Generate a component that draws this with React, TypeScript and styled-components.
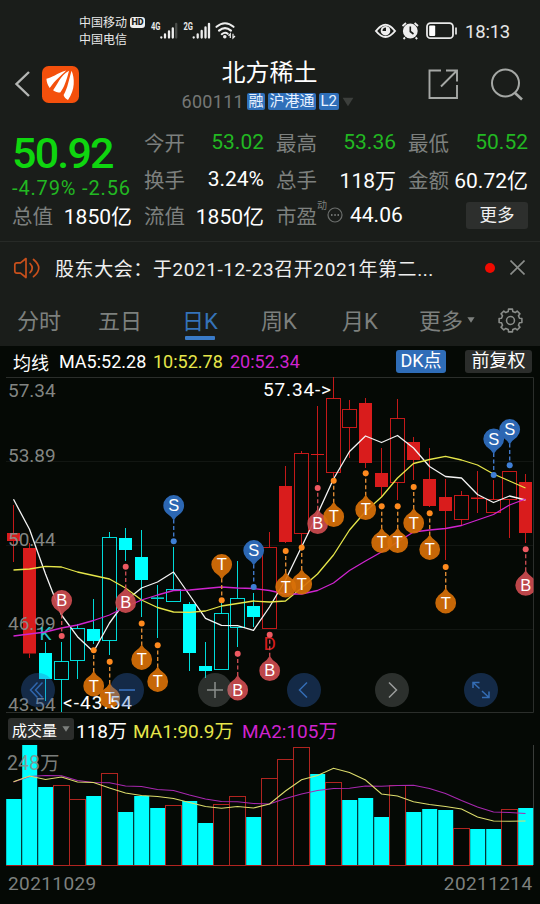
import React from 'react';
import styled, { createGlobalStyle } from 'styled-components';

const FONT = 'Roboto, "Noto Sans CJK SC", sans-serif';
const RED = '#d91c1c';
const CYAN = '#00ffff';
const YELLOW = '#e6e64a';
const MAGENTA = '#cf24cf';

const GlobalStyle = createGlobalStyle`
  html, body { margin: 0; padding: 0; background: #050905; }
  * { box-sizing: border-box; }
  svg { display: block; flex: none; }
`;

const Screen = styled.main`
  width: 540px;
  height: 904px;
  overflow: hidden;
  display: flex;
  flex-direction: column;
  background: #050905;
  color: #fff;
  font-family: ${FONT};
  white-space: nowrap;
`;

const StatusBar = styled.div`
  height: 50px;
  flex: none;
  display: flex;
  align-items: flex-start;
  padding: 0 30px 0 79px;
  background: #1a1d1a;
`;

const Carriers = styled.div`
  margin-top: 15px;
  width: 51px;
  font-size: 12px;
  line-height: 17px;
  color: #e8e8e8;
`;

const HdBadge = styled.span`
  margin-top: 17px;
  width: 15px;
  height: 11px;
  border-radius: 3px;
  background: #eee;
  color: #1a1d1a;
  font-size: 9px;
  font-weight: 900;
  line-height: 11.5px;
  text-align: center;
`;

const StatusIcons = styled.svg`
  margin: 20px 0 0 5px;
`;

const DeviceIcons = styled.svg`
  margin: 20px 0 0 auto;
`;

const Clock = styled.span`
  margin: 20px 0 0 7px;
  width: 45px;
  font-size: 18.5px;
  line-height: 24px;
  letter-spacing: -0.2px;
  color: #e6e6e6;
`;

const Header = styled.header`
  height: 68px;
  flex: none;
  display: grid;
  grid-template-columns: 80px 1fr 120px;
  background: #1a1d1a;
`;

const HeaderSide = styled.div<{ $gap: number; $left: number }>`
  display: flex;
  align-items: center;
  gap: ${(p) => p.$gap}px;
  padding-left: ${(p) => p.$left}px;
`;

const TitleBlock = styled.div`
  display: flex;
  flex-direction: column;
  align-items: center;
  padding-left: 39px;
`;

const StockName = styled.h1`
  margin: 7px 0 0;
  font-size: 24px;
  font-weight: 400;
  line-height: 32px;
`;

const CodeRow = styled.div`
  display: flex;
  align-items: center;
  margin: 3px 0 0 -4px;
  height: 19px;
  gap: 3px;
`;

const Code = styled.span`
  color: #757775;
  font-size: 18px;
  letter-spacing: 0.3px;
`;

const Tag = styled.span`
  height: 17px;
  padding: 0 1.5px;
  border-radius: 2px;
  background: #2f6fb9;
  font-size: 15px;
  line-height: 17px;
  color: #e8f2ff;
`;

const Quote = styled.section`
  height: 124px;
  flex: none;
  display: grid;
  grid-template-columns: repeat(4, 120px);
  grid-template-rows: repeat(3, 36.5px);
  column-gap: 12px;
  padding: 6px 0 0 12px;
  background: #1a1d1a;
  border-bottom: 1px solid #272a27;
`;

const PriceBlock = styled.div`
  grid-row: span 2;
`;

const Price = styled.div`
  margin-top: 6px;
  height: 48px;
  color: #0fd60f;
  font-size: 43px;
  font-weight: 500;
  line-height: 46px;
  letter-spacing: -1.8px;
`;

const Change = styled.div`
  height: 20px;
  color: #22b822;
  font-size: 20px;
  line-height: 20px;
  letter-spacing: 0.85px;
`;

const Metric = styled.div`
  display: flex;
  align-items: center;
  justify-content: space-between;
`;

const MetricLabel = styled.span`
  display: flex;
  align-items: center;
  color: #7d807e;
  font-size: 20.5px;
`;

const Sup = styled.sup`
  align-self: flex-start;
  margin-top: -1px;
  font-size: 10px;
  line-height: 14px;
`;

const MetricValue = styled.span<{ $down?: boolean }>`
  color: ${(p) => (p.$down ? '#22b822' : '#fff')};
  font-size: 21px;
`;

const PeMetric = styled(Metric)`
  justify-content: flex-start;
  gap: 7px;
`;

const MoreCell = styled.div`
  display: flex;
  align-items: center;
  justify-content: flex-end;
`;

const MoreButton = styled.button`
  width: 62px;
  height: 27px;
  padding: 0;
  border: 0;
  border-radius: 3px;
  background: #2d2f2d;
  color: #f0f0f0;
  font: 17.5px/26px ${FONT};
`;

const Notice = styled.section`
  height: 53px;
  flex: none;
  display: flex;
  align-items: center;
  padding: 0 15px 2px 13px;
  background: #1a1d1a;
`;

const NoticeText = styled.span`
  margin-left: 14px;
  font-size: 19px;
  letter-spacing: 0.58px;
  color: #efefef;
`;

const UnreadDot = styled.i`
  width: 10px;
  height: 10px;
  margin: 0 15px 0 auto;
  border-radius: 50%;
  background: #f00a00;
`;

const Tabs = styled.nav`
  height: 51px;
  flex: none;
  display: flex;
  align-items: flex-start;
  padding: 9px 0 0 17px;
  background: #1a1d1a;
`;

const Tab = styled.a<{ $width: number; $active?: boolean }>`
  display: flex;
  width: ${(p) => p.$width}px;
  font-size: 22px;
  line-height: 36px;
  color: ${(p) => (p.$active ? '#3573b9' : '#7d807e')};
`;

const TabLabel = styled.span<{ $active?: boolean }>`
  display: flex;
  flex-direction: column;
  align-items: center;
  &::after {
    content: '';
    width: 30px;
    height: 4px;
    margin-top: -4px;
    border-radius: 1px;
    background: ${(p) => (p.$active ? '#3a7bc8' : 'transparent')};
  }
`;

const Legend = styled.div`
  height: 31px;
  flex: none;
  display: flex;
  align-items: center;
  padding: 0 8px 0 13px;
  font-size: 18px;
`;

const LegendItem = styled.span<{ $color: string; $width: number }>`
  width: ${(p) => p.$width}px;
  color: ${(p) => p.$color};
`;

const Chip = styled.span<{ $bg: string; $width: number }>`
  width: ${(p) => p.$width}px;
  height: 23px;
  border-radius: 3px;
  background: ${(p) => p.$bg};
  font-size: 18px;
  line-height: 22px;
  text-align: center;
`;

const Chips = styled.div`
  display: flex;
  gap: 19px;
  margin: 0 0 0 auto;
`;

const PricePanel = styled.section`
  position: relative;
  height: 337px;
  flex: none;
`;

const ChartSvg = styled.svg`
  overflow: visible;
`;

const ChartControls = styled.div`
  position: absolute;
  left: 21px;
  bottom: 7px;
  width: 477px;
  display: flex;
  justify-content: space-between;
`;

const RoundButton = styled.button<{ $tone: 'blue' | 'gray' }>`
  width: 34px;
  height: 34px;
  padding: 0;
  border: 0;
  border-radius: 50%;
  display: grid;
  place-items: center;
  background: ${(p) => (p.$tone === 'blue' ? 'rgba(50, 108, 200, .34)' : 'rgba(135, 140, 138, .3)')};
`;

const VolumeLegend = styled.div`
  height: 31px;
  flex: none;
  display: flex;
  align-items: center;
  padding: 0 0 1px 8px;
  font-size: 19px;
`;

const IndicatorSelect = styled.span`
  display: flex;
  align-items: center;
  justify-content: center;
  gap: 5px;
  width: 66px;
  height: 22px;
  margin-right: 2px;
  border-radius: 3px;
  background: #2b2d2b;
  font-size: 15px;
`;

const Dates = styled.footer`
  display: flex;
  justify-content: space-between;
  padding: 5px 7.5px 0 8px;
  color: #7d807e;
  font-size: 19px;
  line-height: 26px;
  letter-spacing: 0.4px;
`;

type Kind = 'fill' | 'hollow';
// kind, colour, body top, body bottom, wick top, wick bottom
type Candle = [Kind, string, number, number, number, number];

const candles: Candle[] = [
  ['fill', RED, 533, 541, 505, 562],
  ['fill', RED, 548, 653.5, 543, 658],
  ['fill', CYAN, 653, 679, 642, 701],
  ['hollow', CYAN, 661.5, 679.5, 642, 712],
  ['hollow', CYAN, 628.5, 660.5, 624, 679],
  ['fill', CYAN, 629, 641, 599, 644],
  ['hollow', CYAN, 537.5, 640.5, 532, 655],
  ['fill', CYAN, 538, 550, 528, 561],
  ['fill', CYAN, 557, 580, 530, 617],
  ['fill', CYAN, 597.5, 598.8, 585, 638],
  ['hollow', CYAN, 589.5, 601.5, 547, 589.5],
  ['fill', CYAN, 604, 653, 602, 671],
  ['fill', CYAN, 666, 671, 642, 678],
  ['hollow', CYAN, 613.5, 669.5, 603, 669.5],
  ['hollow', CYAN, 598.5, 627.5, 561, 647],
  ['fill', CYAN, 606, 617, 593, 627],
  ['hollow', RED, 547.5, 628.5, 532, 628.5],
  ['fill', RED, 486, 542, 466, 543],
  ['hollow', RED, 453.5, 533.5, 451, 547],
  ['fill', RED, 454, 455, 406, 482],
  ['hollow', RED, 398.5, 472.5, 377, 477],
  ['hollow', RED, 409.5, 427.5, 400, 458],
  ['fill', RED, 403, 463, 398, 468],
  ['fill', RED, 473, 487, 448, 497],
  ['hollow', RED, 418.5, 482.5, 399, 500],
  ['fill', RED, 442, 460, 437, 480],
  ['fill', RED, 479, 506, 448, 507],
  ['fill', RED, 497, 511, 479, 560],
  ['hollow', RED, 495.5, 519.5, 491, 526],
  ['fill', RED, 497.5, 499, 471, 513],
  ['hollow', RED, 499.5, 512.5, 480, 512.5],
  ['hollow', RED, 471.5, 499.5, 471.5, 538],
  ['fill', RED, 482, 533, 474, 543],
];

const ma5 = [499.3, 529.3, 574, 615, 636.7, 651.7, 623, 601, 588, 582, 572, 595, 618.3, 625.3, 625.7, 630.3, 607, 580, 547, 514, 479, 451.5, 436, 442.5, 435.5, 448, 466.5, 476.5, 478, 494.5, 502.5, 496, 500];
const ma10 = [570, 569, 566.3, 567, 572, 575.5, 579, 588, 600, 607.5, 612, 612.3, 611, 606, 603.5, 601, 602, 601, 588, 574, 555, 530, 511.5, 497, 478, 463.5, 459.5, 456.3, 460, 465, 474, 481, 488];
const ma20 = [636, 634, 632, 628, 625, 620.5, 615, 607, 600, 595, 590.5, 590, 588.5, 587, 588, 588.5, 590.5, 594, 594, 590.5, 583, 570.5, 561, 552, 542, 532, 530, 528.5, 525.5, 520, 514.5, 505, 499];

// letter, candle index, pin centre, anchor dot
type Pin = ['B' | 'S' | 'T', number, number, number];
const pins: Pin[] = [
  ['B', 3, 600.5, 636],
  ['T', 5, 686, 650.3],
  ['T', 6, 698, 661.7],
  ['B', 7, 602.5, 566.7],
  ['T', 8, 659.5, 623.5],
  ['T', 9, 681.5, 645.3],
  ['S', 10, 505.5, 541.3],
  ['T', 13, 564.5, 600.3],
  ['B', 14, 690, 653.7],
  ['S', 15, 550.5, 587],
  ['B', 16, 670.7, 634.7],
  ['T', 17, 587, 551],
  ['T', 18, 584, 547.5],
  ['B', 19, 523.7, 488],
  ['T', 20, 516.7, 480.7],
  ['T', 22, 509.7, 473.3],
  ['T', 23, 542.7, 506.3],
  ['T', 24, 542.7, 506.3],
  ['T', 25, 523, 487],
  ['T', 26, 549.5, 513.3],
  ['T', 27, 603, 567],
  ['S', 30, 439, 475],
  ['S', 31, 429.5, 465.3],
  ['B', 32, 585.3, 549.3],
];

const pinColors = {
  B: { body: 'rgba(203,75,80,.93)', dot: '#ee5a62', dash: '#c44a50' },
  S: { body: '#2c67b3', dot: '#3f7fd6', dash: '#3f78c8' },
  T: { body: 'rgba(216,112,8,.92)', dot: '#ff8a1e', dash: '#dd8a34' },
};

// true = hollow red bar, otherwise solid cyan
const volumes: [number, boolean][] = [
  [799, false], [745, false], [787, false], [785.5, true], [799.5, true], [796, false], [773.5, true],
  [812, false], [796, false], [808, false], [805.5, true], [801, false], [823, false], [804.5, true],
  [796.5, true], [817, false], [778.5, true], [759.5, true], [747.5, true], [774, false], [782.5, true],
  [800, false], [798, false], [817, false], [785.5, true], [812, false], [809, false], [810, false],
  [828.5, true], [829, false], [829, false], [809.5, true], [808, false],
];
const volMa1 = [781.7, 776, 779.5, 777, 782, 782.5, 788, 793, 795.5, 796.5, 798.5, 802.5, 806.5, 808.3, 806.5, 808, 804, 791, 779.7, 775.5, 768.3, 772.5, 780, 794, 796, 801.7, 804.5, 806.5, 809, 817, 821, 821.3, 821];
const volMa2 = [782, 776.5, 775.5, 775.7, 780.5, 782.5, 782.7, 786, 786.5, 789.5, 790.5, 795, 799, 801.5, 801.7, 803.5, 804, 798.5, 794, 790.5, 788.5, 788.3, 786, 786.3, 785.5, 785.3, 788.5, 793.5, 800.5, 807, 812, 812.5, 813.5];

const cx = (i: number) => 13.5 + i * 16;
const toPoints = (ys: number[]) => ys.map((y, i) => `${cx(i)},${y}`).join(' ');

const CandleMark = ({ data, index }: { data: Candle; index: number }) => {
  const [kind, color, top, bottom, high, low] = data;
  const x = cx(index);
  return (
    <g stroke={color} strokeWidth={1} strokeOpacity={color === RED ? 0.9 : 0.85}>
      {high < top && <line x1={x} x2={x} y1={high} y2={top} />}
      {low > bottom && <line x1={x} x2={x} y1={bottom} y2={low} />}
      {kind === 'fill' ? (
        <rect x={x - 6.5} y={top} width={13} height={bottom - top} fill={color} stroke="none" />
      ) : (
        <rect x={x - 7} y={top} width={14} height={bottom - top} fill="none" />
      )}
    </g>
  );
};

const PinMark = ({ data }: { data: Pin }) => {
  const [letter, index, y, dot] = data;
  const x = cx(index) + 0.2;
  const dir = dot > y ? 1 : -1;
  const c = pinColors[letter];
  const r = 10.4;
  return (
    <g>
      <line x1={x} x2={x} y1={y + dir * 14} y2={dot} stroke={c.dash} strokeWidth={1.4} strokeDasharray="4 2.5" />
      <circle cx={x} cy={dot} r={3} fill={c.dot} />
      <path
        d={`M${x - 7.3} ${y + dir * 7.4}A${r} ${r} 0 1 ${dir > 0 ? 1 : 0} ${x + 7.3} ${y + dir * 7.4}Q${x + 2} ${y + dir * 11} ${x} ${y + dir * 15}Q${x - 2} ${y + dir * 11} ${x - 7.3} ${y + dir * 7.4}Z`}
        fill={c.body}
      />
      <text x={x} y={y + 5.7} textAnchor="middle" fontFamily="Liberation Sans, sans-serif" fontSize={16.5} fill="#fff">
        {letter}
      </text>
    </g>
  );
};

const PriceChart = () => (
  <ChartSvg width="540" height="337" viewBox="0 377 540 337" fontFamily={FONT}>
    <clipPath id="plot"><rect x="6" y="377" width="527.5" height="337" /></clipPath>
    <g stroke="#121612">
      <path d="M6 461.5H533M6 545.5H533M6 629.5H533" />
      <path d="M6 377.5H533.5V712.5H6" fill="none" stroke="#2b2e2b" />
    </g>
    <g clipPath="url(#plot)">
      {candles.map((c, i) => <CandleMark key={i} data={c} index={i} />)}
    </g>
    <g fontSize="19" fill="#8b8e8b" fillOpacity=".95">
      <text x="8" y="397.3">57.34</text>
      <text x="8" y="462.3">53.89</text>
      <text x="8" y="546">50.44</text>
      <text x="8" y="629.7">46.99</text>
      <text x="8" y="711.3">43.54</text>
    </g>
    <text x="39.5" y="640" fontSize="19" fill="#22c4cc">K</text>
    <text x="263.5" y="650" fontSize="19" fill={RED}>D</text>
    <g fill="none" strokeWidth="1.3" strokeLinejoin="round">
      <polyline points={toPoints(ma5)} stroke="#f4f4f4" />
      <polyline points={toPoints(ma10)} stroke={YELLOW} />
      <polyline points={toPoints(ma20)} stroke={MAGENTA} />
    </g>
    <g clipPath="url(#plot)">
      {pins.map((p, i) => <PinMark key={i} data={p} />)}
    </g>
    <g fontSize="19" fill="#fff">
      <text x="263" y="396.3" textLength="68">57.34-&gt;</text>
      <text x="63" y="709.3" textLength="69">&lt;-43.54</text>
    </g>
  </ChartSvg>
);

const VolumeChart = () => (
  <ChartSvg width="540" height="121" viewBox="0 745 540 121" fontFamily={FONT}>
    <path d="M533.5 745V865" stroke="#3a3d3a" />
    <path d="M6 865.5H533" stroke="#a01818" />
    {volumes.map(([top, up], i) =>
      up ? (
        <rect key={i} x={cx(i) - 8} y={top} width={16} height={865.5 - top} fill="none" stroke="#b02420" />
      ) : (
        <rect key={i} x={cx(i) - 7.3} y={top} width={15} height={865 - top} fill={CYAN} />
      ),
    )}
    <text x="7" y="770" fontSize="19.5" fill="#8b8e8b" fillOpacity=".9">248万</text>
    <g fill="none" strokeWidth="1.1">
      <polyline points={toPoints(volMa2)} stroke="#a828b0" />
      <polyline points={toPoints(volMa1)} stroke="#dcdc6c" />
    </g>
  </ChartSvg>
);

const SignalIcons = () => (
  <StatusIcons width="90" height="22" viewBox="150 20 90 22">
    <g fontFamily={FONT} fontSize="10" fontWeight="700" fill="#e8e8e8">
      <text x="151" y="30" textLength="9.5" lengthAdjust="spacingAndGlyphs">4G</text>
      <text x="183.5" y="30" textLength="9.5" lengthAdjust="spacingAndGlyphs">2G</text>
    </g>
    <g stroke="#eee" strokeWidth="2.3" strokeLinecap="round">
      <path d="M161.3 37.3V37.6M165 34.5V37.6M169 31.5V37.6M172.8 28.5V37.6" />
      <path d="M176.2 24V37.6" stroke="#4a4d4a" />
      <path d="M193.7 37.3V37.6M197.7 34.5V37.6M201.7 31V37.6M205.5 27.5V37.6M209 23.8V37.6" />
    </g>
    <g fill="none" stroke="#eee" strokeWidth="2.1" strokeLinecap="round">
      <path d="M216.5 26.8Q225 19.7 233.5 26.8M219 30.6Q225 25.5 231 30.6M221.8 34.2Q225 31.6 227.7 33.8" />
    </g>
    <circle cx="224.8" cy="36.8" r="1.8" fill="#eee" />
    <path d="M230.3 38V33.8L228.5 35.8M233 33.8V38L235 36" fill="none" stroke="#eee" strokeWidth="1.2" />
  </StatusIcons>
);

const PowerIcons = () => (
  <DeviceIcons width="84" height="22" viewBox="375 20 84 22">
    <path d="M377 31Q386.5 18.5 396 31Q386.5 43 377 31Z" fill="none" stroke="#eee" strokeWidth="2" />
    <circle cx="386.5" cy="30.7" r="4.8" fill="#eee" />
    <path d="M387 31V27.5A3.5 3.5 0 0 0 383.5 31Z" fill="#1a1d1a" />
    <circle cx="411.3" cy="31" r="7.4" fill="#eee" />
    <path d="M403.5 26L407 23M415.6 23L419 26M406 37.5L404.5 39M416.6 37.5L418.2 39" stroke="#eee" strokeWidth="1.8" />
    <path d="M411.3 26.5V31.5L414.5 34" fill="none" stroke="#1a1d1a" strokeWidth="1.6" />
    <rect x="428" y="23.2" width="26" height="15" rx="3.5" fill="none" stroke="#e8e8e8" strokeWidth="1.8" />
    <rect x="430.2" y="25.5" width="6" height="10.5" rx="1" fill="#fff" />
    <path d="M457 27.5V34.5" stroke="#ddd" strokeWidth="1.8" />
  </DeviceIcons>
);

const BrandIcon = () => (
  <svg width="37" height="37" viewBox="0 0 36 36">
    <rect width="36" height="36" rx="6.5" fill="#f4500c" />
    <g fill="#fff">
      <path d="M23.5 4.3C18.5 9.5 13 13.5 7.5 21.3C5.5 18.5 4.5 15.5 4.3 12.3C9 11.8 15 6.8 23.5 4.3Z" />
      <path d="M26.3 4.6C24 13.5 22 20 17.8 25.8C15.5 25.8 12.5 25.2 10.8 23.6C15.5 17.5 17.5 9.500 26.3 4.6Z" />
      <path d="M28.8 4.6C31.8 12 32.5 23 25.3 33C23.2 32 21.5 30.5 21 28.3C25.3 21 26 13 28.8 4.6Z" />
    </g>
  </svg>
);

const Caret = ({ size, color }: { size: number; color: string }) => (
  <svg width={size} height={size} viewBox="0 0 10 10"><path d="M0.5 1.5H9.5L5 8.5Z" fill={color} /></svg>
);

const SpeakerIcon = () => (
  <svg width="28" height="22" viewBox="13 16 28 22">
    <g fill="none" stroke="#c9501c" strokeWidth="1.7" strokeLinecap="round" strokeLinejoin="round">
      <path d="M26 17.5L20.5 21.8H17Q14.8 21.8 14.8 24V30Q14.8 32.2 17 32.2H20.5L26 36.5Z" />
      <path d="M30 22.5Q34.5 27 30 31.7M33.5 18.5Q44 27 33.5 35.7" />
    </g>
  </svg>
);

const gearPath = (() => {
  const pts: string[] = [];
  for (let t = 0; t < 8; t += 1) {
    const a = (t * Math.PI) / 4 - Math.PI / 2;
    ([[-0.25, 8.9], [-0.17, 11.1], [0.17, 11.1], [0.25, 8.9]] as const).forEach(([da, r]) => {
      pts.push(`${(12 + r * Math.cos(a + da)).toFixed(2)} ${(12 + r * Math.sin(a + da)).toFixed(2)}`);
    });
  }
  return `M${pts.join('L')}Z`;
})();

const GearIcon = () => (
  <svg width="25" height="25" viewBox="0 0 24 24" fill="none" stroke="#8b8e8b" strokeWidth="1.5" strokeLinejoin="round">
    <path d={gearPath} />
    <circle cx="12" cy="12" r="3.8" />
  </svg>
);

const GearSlot = styled.div`
  margin-top: 4px;
`;

const TabCaret = styled.span`
  margin: 12px 0 0 4px;
`;

const controls: { tone: 'blue' | 'gray'; path: string; stroke: string }[] = [
  { tone: 'blue', path: 'M16.5 9.5L9.5 17L16.5 24.5M21.5 9.5L14.5 17L21.5 24.5', stroke: '#2f66ad' },
  { tone: 'blue', path: 'M9 17H25', stroke: '#3a76c4' },
  { tone: 'gray', path: 'M9 17H25M17 9V25', stroke: '#8b8e8c' },
  { tone: 'blue', path: 'M20 9.5L12.5 17L20 24.5', stroke: '#346db5' },
  { tone: 'gray', path: 'M14 9.5L21.5 17L14 24.5', stroke: '#9a9d9b' },
  { tone: 'blue', path: 'M15.5 15.5L9 9.5M9 15V9.5H15.5M18 18L25 24.5M25 18.5V24.5H18', stroke: '#346db5' },
];

const metrics = {
  top: [['今开', '53.02'], ['最高', '53.36'], ['最低', '50.52']],
  middle: [['换手', '3.24%'], ['总手', '118万'], ['金额', '60.72亿']],
  bottom: [['总值', '1850亿'], ['流值', '1850亿']],
};

const MetricCell = ({ item, down }: { item: string[]; down?: boolean }) => (
  <Metric>
    <MetricLabel>{item[0]}</MetricLabel>
    <MetricValue $down={down}>{item[1]}</MetricValue>
  </Metric>
);

export default function App() {
  return (
    <Screen>
      <GlobalStyle />
      <StatusBar>
        <Carriers>中国移动<br />中国电信</Carriers>
        <HdBadge>HD</HdBadge>
        <SignalIcons />
        <PowerIcons />
        <Clock>18:13</Clock>
      </StatusBar>

      <Header>
        <HeaderSide $gap={11} $left={14}>
          <svg width="17" height="28" viewBox="0 0 17 28"><path d="M15 2L2.5 14L15 26" fill="none" stroke="#b4b6b4" strokeWidth="2.4" /></svg>
          <BrandIcon />
        </HeaderSide>
        <TitleBlock>
          <StockName>北方稀土</StockName>
          <CodeRow>
            <Code>600111</Code>
            <Tag>融</Tag>
            <Tag>沪港通</Tag>
            <Tag>L2</Tag>
            <Caret size={12} color="#3c3f3c" />
          </CodeRow>
        </TitleBlock>
        <HeaderSide $gap={31} $left={8}>
          <svg width="31" height="32" viewBox="0 0 31 32" fill="none" stroke="#a5a8a5" strokeWidth="1.9">
            <path d="M13 2.5H1.5V30H29V17M18 2.5H29V13.5M29 2.5L13 18.5" />
          </svg>
          <svg width="34" height="34" viewBox="0 0 34 34" fill="none" stroke="#a5a8a5" strokeWidth="2">
            <circle cx="15.5" cy="16" r="13.5" /><path d="M24.5 25.5L32 32.5" strokeWidth="2.6" />
          </svg>
        </HeaderSide>
      </Header>

      <Quote>
        <PriceBlock>
          <Price>50.92</Price>
          <Change>-4.79% -2.56</Change>
        </PriceBlock>
        {metrics.top.map((m) => <MetricCell key={m[0]} item={m} down />)}
        {metrics.middle.map((m) => <MetricCell key={m[0]} item={m} />)}
        {metrics.bottom.map((m) => <MetricCell key={m[0]} item={m} />)}
        <PeMetric>
          <MetricLabel>
            市盈<Sup>动</Sup>
            <svg width="16" height="16" viewBox="0 0 16 16">
              <circle cx="8" cy="8" r="7" fill="none" stroke="#6b6e6c" strokeWidth="1.2" />
              <path d="M4 8H5.5M7.3 8H8.8M10.5 8H12" stroke="#8b8e8c" strokeWidth="1.5" />
            </svg>
          </MetricLabel>
          <MetricValue>44.06</MetricValue>
        </PeMetric>
        <MoreCell><MoreButton>更多</MoreButton></MoreCell>
      </Quote>

      <Notice>
        <SpeakerIcon />
        <NoticeText>股东大会：于2021-12-23召开2021年第二...</NoticeText>
        <UnreadDot />
        <svg width="15" height="15" viewBox="0 0 15 15"><path d="M0.5 0.5L14.5 14.5M14.5 0.5L0.5 14.5" stroke="#8b8e8b" strokeWidth="1.6" /></svg>
      </Notice>

      <Tabs>
        <Tab $width={81}><TabLabel>分时</TabLabel></Tab>
        <Tab $width={84}><TabLabel>五日</TabLabel></Tab>
        <Tab $width={79} $active><TabLabel $active>日K</TabLabel></Tab>
        <Tab $width={81}><TabLabel>周K</TabLabel></Tab>
        <Tab $width={77}><TabLabel>月K</TabLabel></Tab>
        <Tab $width={79}><TabLabel>更多</TabLabel><TabCaret><Caret size={8} color="#7d807e" /></TabCaret></Tab>
        <GearSlot><GearIcon /></GearSlot>
      </Tabs>

      <Legend>
        <LegendItem $color="#fff" $width={46}>均线</LegendItem>
        <LegendItem $color="#fff" $width={94}>MA5:52.28</LegendItem>
        <LegendItem $color={YELLOW} $width={77}>10:52.78</LegendItem>
        <LegendItem $color={MAGENTA} $width={77}>20:52.34</LegendItem>
        <Chips>
          <Chip $bg="#2f6db8" $width={50}>DK点</Chip>
          <Chip $bg="#2b2d2b" $width={67}>前复权</Chip>
        </Chips>
      </Legend>

      <PricePanel>
        <PriceChart />
        <ChartControls>
          {controls.map((c) => (
            <RoundButton key={c.path} $tone={c.tone}>
              <svg width="34" height="34" fill="none" stroke={c.stroke} strokeWidth="1.5"><path d={c.path} /></svg>
            </RoundButton>
          ))}
        </ChartControls>
      </PricePanel>

      <VolumeLegend>
        <IndicatorSelect>成交量<Caret size={8} color="#7d807e" /></IndicatorSelect>
        <LegendItem $color="#fff" $width={57}>118万</LegendItem>
        <LegendItem $color={YELLOW} $width={109}>MA1:90.9万</LegendItem>
        <LegendItem $color={MAGENTA} $width={100}>MA2:105万</LegendItem>
      </VolumeLegend>
      <VolumeChart />
      <Dates><span>20211029</span><span>20211214</span></Dates>
    </Screen>
  );
}
